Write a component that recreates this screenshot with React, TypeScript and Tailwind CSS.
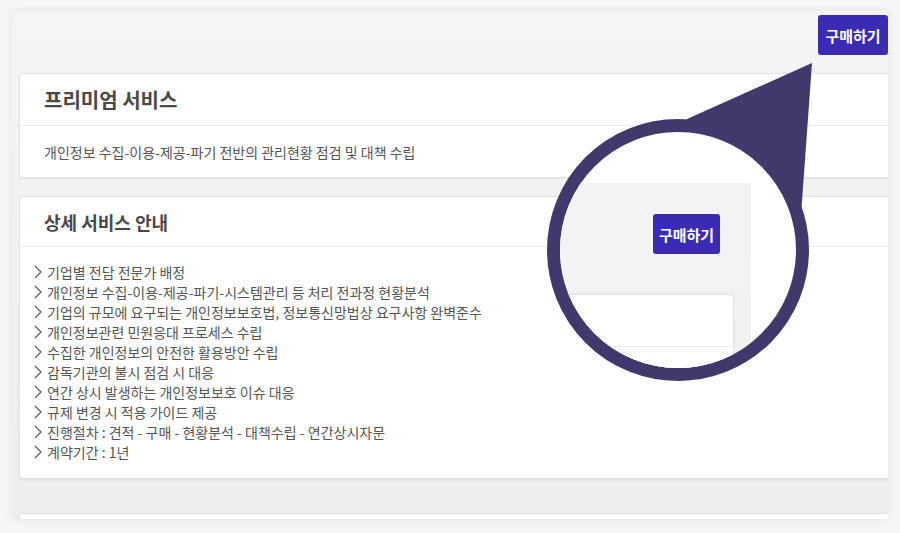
import React from "react";

const items = [
  "기업별 전담 전문가 배정",
  "개인정보 수집-이용-제공-파기-시스템관리 등 처리 전과정 현황분석",
  "기업의 규모에 요구되는 개인정보보호법, 정보통신망법상 요구사항 완벽준수",
  "개인정보관련 민원응대 프로세스 수립",
  "수집한 개인정보의 안전한 활용방안 수립",
  "감독기관의 불시 점검 시 대응",
  "연간 상시 발생하는 개인정보보호 이슈 대응",
  "규제 변경 시 적용 가이드 제공",
  "진행절차 : 견적 - 구매 - 현황분석 - 대책수립 - 연간상시자문",
  "계약기간 : 1년",
];

function Chevron() {
  return (
    <svg width="8" height="14" viewBox="0 0 8 14" className="shrink-0">
      <path d="M1 1 L7 7 L1 13" fill="none" stroke="#5a5a5a" strokeWidth="1.2" />
    </svg>
  );
}

export default function App() {
  return (
    <div className="relative w-[900px] h-[533px] bg-[#f6f6f6] overflow-hidden pt-[11px] pl-[12px] font-['Noto_Sans_CJK_KR',sans-serif]">
      <div className="w-[876px] h-[508px] rounded-[4px] bg-linear-to-b from-[#f5f5f5] to-[#ededed] shadow-[0_0_10px_rgba(0,0,0,0.07)] overflow-hidden flex flex-col">
        <div className="h-[62px] shrink-0 flex justify-end pt-[4px]">
          <button className="w-[70px] h-[40px] rounded-[3px] bg-[#3a2bb4] text-white text-[15px] font-bold leading-none">
            구매하기
          </button>
        </div>
        <div className="pl-[7px] flex flex-col">
          <div className="h-[105px] bg-white border border-[#e2e2e2] border-r-0 rounded-l-[3px] shadow-[0_1px_2px_rgba(0,0,0,0.05)] flex flex-col">
            <div className="h-[52px] shrink-0 border-b border-[#ececec] flex items-center pl-[24px]">
              <h2 className="text-[20px] font-bold text-[#484848] leading-none">프리미엄 서비스</h2>
            </div>
            <div className="flex-1 flex items-center pl-[24px]">
              <p className="text-[14px] text-[#555] leading-none">
                개인정보 수집-이용-제공-파기 전반의 관리현황 점검 및 대책 수립
              </p>
            </div>
          </div>
          <div className="mt-[18px] h-[283px] bg-white border border-[#e2e2e2] border-r-0 rounded-l-[3px] shadow-[0_1px_2px_rgba(0,0,0,0.05)] flex flex-col">
            <div className="h-[50px] shrink-0 border-b border-[#ececec] flex items-center pl-[24px]">
              <h3 className="text-[18px] font-bold text-[#484848] leading-none">상세 서비스 안내</h3>
            </div>
            <ul className="pt-[15px] pl-[14px] flex flex-col">
              {items.map((t) => (
                <li key={t} className="h-[20px] flex items-center gap-[5px] text-[14px] text-[#555] leading-none">
                  <Chevron />
                  <span>{t}</span>
                </li>
              ))}
            </ul>
          </div>
          <div className="mt-[34px] h-[40px] bg-white border border-[#e2e2e2] border-r-0 rounded-l-[3px]"></div>
        </div>
      </div>

      <svg className="absolute left-0 top-0" width="900" height="533" viewBox="0 0 900 533">
        <polygon points="812,63 687,119 680,200 801,215" fill="#3f3a6b" />
      </svg>

      <div className="absolute left-[547px] top-[119px] w-[262px] h-[262px] rounded-full border-[13px] border-[#3f3a6b] bg-white overflow-hidden">
        <div className="absolute left-0 top-[51px] w-[191px] h-[220px] bg-linear-to-b from-[#f4f4f4] to-[#f1f1f1]">
          <div className="absolute left-[93px] top-[31px] w-[67px] h-[40px] rounded-[3px] bg-[#3a2bb4] text-white text-[15px] font-bold flex items-center justify-center leading-none">
            구매하기
          </div>
          <div className="absolute left-0 top-[111px] w-[174px] h-[120px] bg-white border border-[#e2e2e2] border-l-0 rounded-tr-[4px] shadow-[0_0_4px_rgba(0,0,0,0.04)]">
            <div className="h-[52px] border-b border-[#ececec]"></div>
          </div>
        </div>
      </div>
    </div>
  );
}
